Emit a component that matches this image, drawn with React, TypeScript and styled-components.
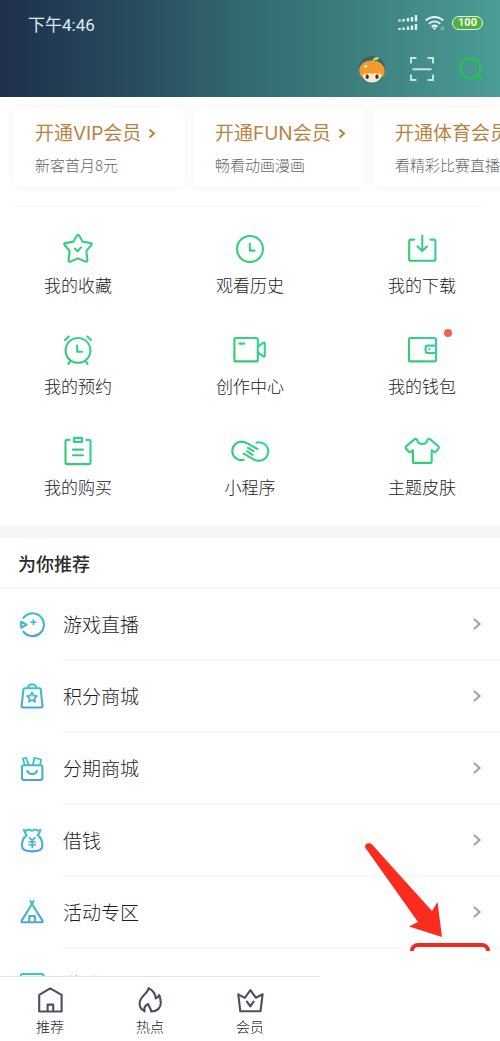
import React from "react";
import styled, { createGlobalStyle } from "styled-components";

const GlobalStyle = createGlobalStyle`
  * { box-sizing: border-box; }
  body {
    margin: 0;
    background: #fff;
    color: #333;
    font-family: "Noto Sans CJK SC", "Noto Sans", sans-serif;
    font-weight: 300;
  }
  a { color: inherit; text-decoration: none; }
`;

const Page = styled.div`
  position: relative;
  min-height: 100vh;
  overflow: hidden;
  background: #fff;
`;

const Header = styled.header`
  height: 97px;
  background: linear-gradient(90deg, #1e2f4d 0%, #29505f 30%, #336a71 50%, #3f8380 75%, #4a9d95 100%);
`;

const StatusBar = styled.div`
  display: flex;
  align-items: center;
  justify-content: space-between;
  height: 46px;
  padding: 0 17px 0 28px;
  color: #dcecf4;
  font-family: Roboto, "Noto Sans CJK SC", sans-serif;
  font-size: 17px;
  font-weight: 400;
`;

const StatusIcons = styled.div`
  display: flex;
  align-items: center;
  gap: 7px;
`;

const Battery = styled.span`
  width: 31px;
  height: 14px;
  border: 1px solid #e8f8ee;
  border-radius: 7px;
  background: #4db535;
  color: #fff;
  font: 700 11px/12px Roboto, sans-serif;
  text-align: center;
`;

const Toolbar = styled.div`
  display: flex;
  align-items: center;
  justify-content: flex-end;
  gap: 25px;
  height: 46px;
  padding-right: 17px;
`;

const IconButton = styled.button`
  display: flex;
  padding: 0;
  border: 0;
  background: none;
`;

const Offers = styled.section`
  display: flex;
  gap: 8px;
  padding: 10px 0 19px 13px;
  overflow-x: auto;
  scrollbar-width: none;
`;

const Offer = styled.a`
  flex: none;
  width: 172px;
  height: 80px;
  padding: 13px 0 0 22px;
  border-radius: 4px;
  background: #fff;
  box-shadow: 0 0 6px rgba(0, 0, 0, 0.07);
  white-space: nowrap;
`;

const OfferTitle = styled.div`
  display: flex;
  align-items: center;
  gap: 7px;
  color: #b9823f;
  font-family: Inter, "Noto Sans CJK SC", sans-serif;
  font-size: 19px;
  font-weight: 400;
  line-height: 28px;
`;

const OfferNote = styled.div`
  margin-top: 5px;
  color: #666;
  font-size: 15px;
  line-height: 24px;
`;

const Shortcuts = styled.nav`
  display: grid;
  grid-template-columns: repeat(3, 1fr);
  gap: 35px 16px;
  padding: 24px 0 25px;
`;

const Rule = styled.hr`
  height: 1px;
  margin: 0 14px;
  border: 0;
  background: #f8f8f8;
`;

const Shortcut = styled.a`
  display: flex;
  flex-direction: column;
  align-items: center;
  gap: 6px;
  color: #222;
  font-size: 17px;
  line-height: 24px;
`;

const ShortcutIcon = styled.span`
  position: relative;
  display: flex;
`;

const Dot = styled.i`
  position: absolute;
  top: -3px;
  right: -12px;
  width: 8px;
  height: 8px;
  border-radius: 50%;
  background: #ef6149;
`;

const Band = styled.div`
  height: 13px;
  margin-top: 1px;
  background: #f6f6f6;
`;

const Heading = styled.h2`
  margin: 0;
  padding: 0 18px;
  border-bottom: 1px solid #f5f5f5;
  color: #2b2b2b;
  font-size: 18px;
  font-weight: 500;
  line-height: 50px;
`;

const List = styled.ul`
  margin: 0;
  padding: 0;
  list-style: none;
`;

const Row = styled.a`
  display: flex;
  align-items: center;
  gap: 17px;
  padding-left: 18px;
`;

const RowBody = styled.span`
  display: flex;
  flex: 1;
  align-items: center;
  justify-content: space-between;
  height: 72px;
  padding: 0 18px 2px 0;
  border-bottom: 1px solid #f6f6f6;
  color: #1c1c1c;
  font-size: 19px;
`;

const Footer = styled.footer`
  position: fixed;
  right: 0;
  bottom: 0;
  left: 0;
  display: flex;
  align-items: flex-end;
`;

const Tabs = styled.nav`
  display: flex;
  width: 64%;
  height: 65px;
  padding: 9px 20px 0 0;
  border-top: 1px solid #e3e3e5;
  background: #fff;
`;

const Tab = styled.a`
  display: flex;
  flex: 1;
  flex-direction: column;
  align-items: center;
  gap: 2px;
  color: #222;
  font-size: 14px;
  line-height: 20px;
`;

const Blank = styled.div`
  flex: 1;
  height: 90px;
  background: #fff;
`;

const Arrow = styled.svg`
  position: fixed;
  right: 57px;
  bottom: 102px;
`;

const Highlight = styled.div`
  position: fixed;
  right: 10px;
  bottom: 68px;
  width: 80px;
  height: 30px;
  border: 4px solid #ee2a24;
  border-radius: 8px;
`;

type IconProps = { size: number; stroke: string; children: React.ReactNode };

const Icon = ({ size, stroke, children }: IconProps) => (
  <svg
    width={size}
    height={size}
    viewBox={`0 0 ${size} ${size}`}
    fill="none"
    stroke={stroke}
    strokeWidth="2.1"
    strokeLinecap="round"
    strokeLinejoin="round"
    overflow="visible"
    aria-hidden="true"
  >
    {children}
  </svg>
);

const Gradients = () => (
  <svg width="0" height="0" style={{ position: "absolute" }} aria-hidden="true">
    <defs>
      <linearGradient id="green" gradientUnits="userSpaceOnUse" x1="2" y1="30" x2="34" y2="6">
        <stop offset="0" stopColor="#32ca62" />
        <stop offset="1" stopColor="#36d2a6" />
      </linearGradient>
      <linearGradient id="blue" gradientUnits="userSpaceOnUse" x1="14" y1="2" x2="14" y2="26">
        <stop offset="0" stopColor="#3cc7c4" />
        <stop offset="1" stopColor="#4aa3da" />
      </linearGradient>
    </defs>
  </svg>
);

const offers = [
  { title: "开通VIP会员", note: "新客首月8元" },
  { title: "开通FUN会员", note: "畅看动画漫画" },
  { title: "开通体育会员", note: "看精彩比赛直播" },
];

const shortcuts = [
  {
    label: "我的收藏",
    icon: (
      <>
        <path d="M16.9 4.4q1.1-1.4 2.2 0l3.4 6.2 8.4 1.5q1.5.5.5 1.9l-5 5.9 1 9.5q-.2 1.8-1.8 1.2L18 27.4l-7.6 3.2q-1.6.6-1.800-1.200l1-9.500-5-5.900q-1-1.400.500-1.900l8.400-1.500z" />
        <path d="M14.8 17.6l2.8 2.6 3.4-3.8" />
      </>
    ),
  },
  {
    label: "观看历史",
    icon: (
      <>
        <circle cx="18" cy="18" r="13" />
        <path d="M17.8 12.6v7h4.7" />
      </>
    ),
  },
  {
    label: "我的下载",
    icon: (
      <>
        <path d="M10.2 8.6H6.8q-1.6 0-1.6 1.6v18q0 1.6 1.6 1.6h23q1.6 0 1.6-1.6v-18q0-1.6-1.6-1.6h-3.400" />
        <path d="M18.3 4.6V20M13.6 15.4l4.7 4.7 4.7-4.7" />
      </>
    ),
  },
  {
    label: "我的预约",
    icon: (
      <>
        <circle cx="18" cy="18.4" r="12.4" />
        <path d="M17.2 13.6v6.2h5M5 8L8.800 4.400M31 8l-3.800-3.600M10.600 28.800L8.400 31.800M25.400 28.800l2.200 3" />
      </>
    ),
  },
  {
    label: "创作中心",
    icon: (
      <>
        <rect x="2.4" y="6" width="23.4" height="23.4" rx="1.5" />
        <path d="M7.4 11.6h4.8M25.8 14.6l5.6-4q1.4-.6 1.4 1v11.8q0 1.6-1.400 1l-5.600-4" />
      </>
    ),
  },
  {
    label: "我的钱包",
    dot: true,
    icon: (
      <>
        <rect x="5" y="6" width="27" height="23.4" rx="1.5" />
        <path d="M32 13.600h-8.400q-2 0-2 2v3.400q0 2 2 2H32M25.400 17.100v.4" />
      </>
    ),
  },
  {
    label: "我的购买",
    icon: (
      <>
        <path d="M9.4 6.9H7.2q-1.7 0-1.7 1.7v20.8q0 1.7 1.7 1.7h21.600q1.700 0 1.700-1.700V8.600q0-1.700-1.700-1.700h-2.200" />
        <rect x="14" y="4.9" width="8" height="4" />
        <path d="M13 16.6h10M13 22.3h10" />
      </>
    ),
  },
  {
    label: "小程序",
    icon: (
      <path d="M11.6 26.8C5.4 28.3.3 23.4.3 18.2.3 12.6 4.6 8.6 9.8 8.600c2.400 0 3.800.6 5.600 1.700l10 5.700M24.600 9.600C30.800 8.100 36.200 12.600 36.200 18.200c0 5.600-4.300 9.700-9.500 9.700-2.400 0-3.800-.6-5.600-1.700l-9.400-5.600M16 14.800l5.400 3.400M15.200 18.400l5.400 3.400" />
    ),
  },
  {
    label: "主题皮肤",
    icon: (
      <path d="M11 5.900q1.400-.6 2 .8c1.200 5.600 9.400 5.600 10.600 0q.6-1.400 2-.8l8.600 7.200q1.300 1.300.4 2.400l-2.600 3q-1 1.100-2.300.2l-2-1.500v11.200q0 1.500-1.500 1.500H10.400q-1.500 0-1.500-1.500V17.200l-2 1.500q-1.300.9-2.300-.2l-2.600-3q-.9-1.100.4-2.400z" />
    ),
  },
];

const services = [
  {
    label: "游戏直播",
    icon: (
      <>
        <path d="M5.400 6.800a11.400 11.400 0 1 1 0 13.800" />
        <path d="M3.200 10.600v6.200l5.400-3.100z" />
        <path d="M15.400 8.800v4.600M13.100 11.100h4.600" strokeWidth="1.700" />
      </>
    ),
  },
  {
    label: "积分商城",
    icon: (
      <>
        <path d="M6.600 5.200h15q1 0 1.100 1l1.800 17q0 1.300-1.200 1.300H4.800q-1.200 0-1.200-1.300l1.900-17q.1-1 1.100-1zM9.700 5c1-5 7.700-5 8.700 0" />
        <path d="M14 9.400l1.500 3.200 3.500.4-2.600 2.300.7 3.500-3.100-1.700-3.100 1.700.7-3.500-2.600-2.300 3.500-.4z" strokeWidth="1.700" />
      </>
    ),
  },
  {
    label: "分期商城",
    icon: (
      <>
        <rect x="4" y="10.200" width="20.400" height="14.800" rx="2" />
        <path d="M9.300 15.800c1.200 4.400 8.500 4.400 9.700 0" />
        <path d="M6.800 10L4.900 3.600l3.300-.9L10.800 10M14.800 10l1.700-7.200 6.600 1.700-.9 5.500" strokeWidth="1.800" />
      </>
    ),
  },
  {
    label: "借钱",
    icon: (
      <>
        <path d="M5.900 2.800q1.800 1.600 3.600.2 1.600-1 3 .2 1.500 1 3 0 1.600-1.200 3.200-.2 1.800 1.200 3.700-.2-1.200 3.600-2.600 5.600c3.600 2.400 4.700 6.400 4.600 10.400 0 3.400-3 5.600-10.200 5.600S4 22.200 4 18.800c-.1-4 1-8 4.600-10.400-1.400-2-2.700-5.600-2.700-5.600z" />
        <path d="M11.400 10.600l2.800 3 2.800-3M14.200 13.600v7M11 15h6.400M11 18h6.400" strokeWidth="1.600" />
      </>
    ),
  },
  {
    label: "活动专区",
    icon: (
      <path d="M12.400 2l1.600 3 1.600-3M14 5L3.700 21.600q-.8 1.700.8 1.700h19.200q1.600 0 .8-1.700zM11.300 23v-6h5.600v6" />
    ),
  },
  {
    label: "游戏",
    icon: (
      <>
        <rect x="3" y="3" width="22.500" height="20" rx="1.500" />
        <path d="M10 13h8M14 9v8" />
      </>
    ),
  },
];

const tabs = [
  {
    label: "推荐",
    icon: <path d="M14.200 2.400L25.600 8.800v16.700H3.200V8.800zM11.600 25v-6.400h5.600V25" />,
  },
  {
    label: "热点",
    icon: (
      <path d="M12.600 2.200c-.6 5.600-9 8-9 15.400 0 3.600 1.900 6.200 5 7.700-.8-3 .6-6 3.600-7.300.2 2.500 2.400 3 3 7.500 6.800-.2 9.600-4.300 9.600-8.700 0-3.200-.7-5.400-1.500-7.700-.9 1.600-1.900 2.700-3.600 3.300-.4-4.600-3-8.300-7.100-10.200z" />
    ),
  },
  {
    label: "会员",
    icon: (
      <path d="M2.300 8.300l6.500 3.500 5.600-7.600 5.600 7.600 6.600-3.500-2.100 17H4.300zM11 15.600l3.300 4.700 3.300-4.700" />
    ),
  },
];

export default function App() {
  return (
    <Page>
      <GlobalStyle />
      <Gradients />
      <Header>
        <StatusBar>
          <time>下午4:46</time>
          <StatusIcons>
            <svg width="20" height="16" viewBox="0 0 20 16" stroke="#dff2f4" strokeWidth="2.400" aria-hidden="true">
              <path d="M1.500 6.500V4.500M5.500 6.500V4M10 6.500V3M14 6.500V2M18 6.500V0M1.500 15v-2M5.500 15v-2.500M10 15v-3.500M14 15v-4.500M18 15V9" />
            </svg>
            <svg width="20" height="16" viewBox="0 0 20 16" fill="none" stroke="#e6f6f7" strokeWidth="2" aria-hidden="true">
              <path d="M.8 5.600C5.800.9 13.200.9 18.200 5.600M3.800 8.800c3.400-3 8-3 11.400 0M6.700 11.800c1.700-1.400 3.900-1.400 5.600 0" />
              <path d="M7.500 12.600L9.500 15l2-2.400z" fill="#e6f6f7" stroke="none" />
              <circle cx="17.400" cy="13.400" r="1.300" strokeWidth="1" stroke="#a8d5d2" />
            </svg>
            <Battery>100</Battery>
          </StatusIcons>
        </StatusBar>
        <Toolbar>
          <IconButton type="button" aria-label="个人中心">
            <svg width="26" height="28" viewBox="0 0 26 28" aria-hidden="true">
              <circle cx="13" cy="14" r="13" fill="#37666a" />
              <path d="M2.500 17c0 6 4.500 10.500 10.500 10.500s10.500-4.500 10.500-10.500z" fill="#fbe9cf" />
              <path d="M.3 16.500C0 10 5 5.500 12.700 5.500S26 10 25.700 16.500c-.2 2.500-1.200 4.500-2.400 6-.3-2-1-3-2-4l-2.800.6-2.400-1.300-2.900 1.100-2.700-1.100-2.600 1.300-2.700-.6c-1 1-1.600 2-2 4-1.500-1.500-2.700-3.500-2.900-6z" fill="#f39a2c" />
              <path d="M13.800 6.800c-.2-3 1.200-5 6-4.400-.2 2.400-2 2.500-4 2.500z" fill="#dbe04e" />
              <circle cx="6.700" cy="11.300" r="1.500" fill="#ffe5ad" />
              <ellipse cx="8.200" cy="21.800" rx="1.600" ry="2.300" fill="#5a2618" />
              <ellipse cx="18" cy="21.800" rx="1.600" ry="2.300" fill="#5a2618" />
            </svg>
          </IconButton>
          <IconButton type="button" aria-label="扫一扫">
            <svg width="24" height="24" viewBox="0 0 24 24" fill="none" stroke="#c3e6e4" strokeWidth="2" aria-hidden="true">
              <path d="M1 6.500V1h5.500M17.500 1H23v5.500M23 17.500V23h-5.500M6.500 23H1v-5.500M2.500 12.300h19" />
            </svg>
          </IconButton>
          <IconButton type="button" aria-label="搜索">
            <svg width="24" height="24" viewBox="0 0 24 24" fill="none" stroke="#23c552" strokeWidth="2.200" aria-hidden="true">
              <circle cx="11.300" cy="11.300" r="10" />
              <path d="M18 18l5 5" />
            </svg>
          </IconButton>
        </Toolbar>
      </Header>

      <main>
        <Offers>
          {offers.map((o) => (
            <Offer href="#" key={o.title}>
              <OfferTitle>
                {o.title}
                <svg width="8" height="12" viewBox="0 0 8 12" fill="none" stroke="#b9823f" strokeWidth="2" aria-hidden="true">
                  <path d="M1.500 1.500L6 5.500l-4.500 4" />
                </svg>
              </OfferTitle>
              <OfferNote>{o.note}</OfferNote>
            </Offer>
          ))}
        </Offers>
        <Rule />
        <Shortcuts>
          {shortcuts.map((s) => (
            <Shortcut href="#" key={s.label}>
              <ShortcutIcon>
                <Icon size={36} stroke="url(#green)">{s.icon}</Icon>
                {s.dot && <Dot />}
              </ShortcutIcon>
              {s.label}
            </Shortcut>
          ))}
        </Shortcuts>
        <Band />
        <Heading>为你推荐</Heading>
        <List>
          {services.map((s) => (
            <li key={s.label}>
              <Row href="#">
                <Icon size={28} stroke="url(#blue)">{s.icon}</Icon>
                <RowBody>
                  {s.label}
                  <svg width="10" height="14" viewBox="0 0 10 14" fill="none" stroke="#a0a0a0" strokeWidth="2" aria-hidden="true">
                    <path d="M2 2l5.500 5L2 12" />
                  </svg>
                </RowBody>
              </Row>
            </li>
          ))}
        </List>
      </main>

      <Highlight />
      <Arrow width="80" height="98" viewBox="0 0 80 98" fill="#fb2b1e" aria-hidden="true">
        <path d="M2.500 7C.500 3 6 .500 9 3.500L69 70l5.500-9L79 96 46 85.500l9-4.500z" />
      </Arrow>
      <Footer>
        <Tabs>
          {tabs.map((t) => (
            <Tab href="#" key={t.label}>
              <Icon size={28} stroke="#4a4f63">{t.icon}</Icon>
              {t.label}
            </Tab>
          ))}
        </Tabs>
        <Blank />
      </Footer>
    </Page>
  );
}
